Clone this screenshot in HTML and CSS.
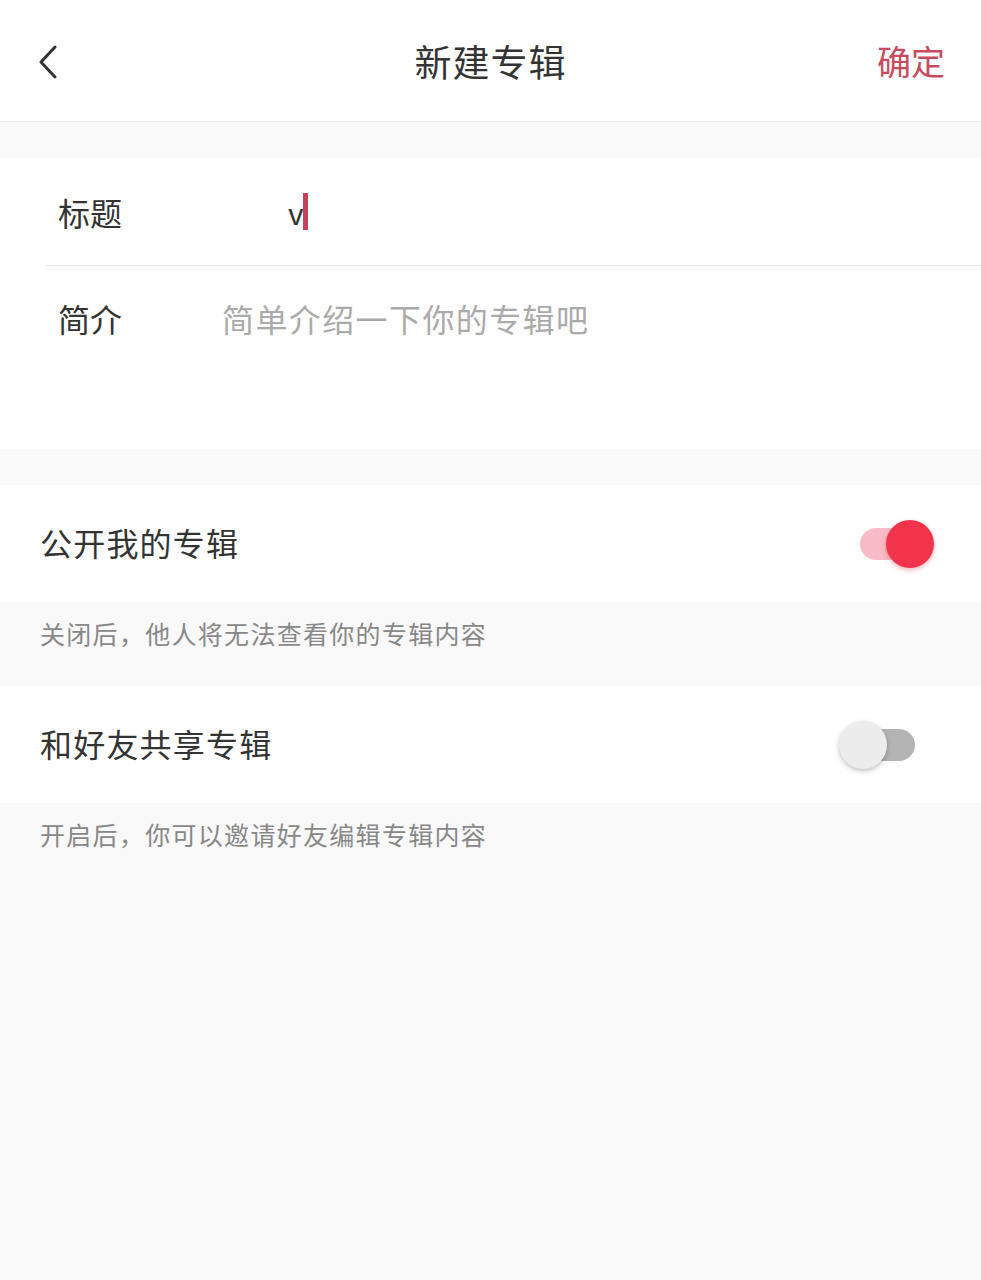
FILE: index.html
```html
<!DOCTYPE html>
<html lang="zh-CN">

<head>
    <meta charset="UTF-8">
    <meta name="viewport" content="width=device-width, initial-scale=1.0">
    <title>新建专辑</title>
    <link rel="stylesheet" href="styles.css">
</head>

<body>
    <header class="topbar">
        <button class="back" aria-label="返回">
            <svg width="20" height="34" viewBox="0 0 20 34">
                <path d="M17 2 L3 17 L17 32" fill="none" stroke="#333" stroke-width="3" stroke-linecap="round" stroke-linejoin="round" />
            </svg>
        </button>
        <h1 class="title">新建专辑</h1>
        <button class="confirm">确定</button>
    </header>

    <section class="form">
        <div class="field first">
            <span class="label">标题</span>
            <span class="value">v<i class="caret"></i></span>
        </div>
        <div class="field intro">
            <span class="label">简介</span>
            <span class="placeholder">简单介绍一下你的专辑吧</span>
        </div>
    </section>

    <section class="setting">
        <span class="setting-name">公开我的专辑</span>
        <span class="switch on"><i class="knob"></i></span>
    </section>
    <p class="hint">关闭后，他人将无法查看你的专辑内容</p>

    <section class="setting">
        <span class="setting-name">和好友共享专辑</span>
        <span class="switch"><i class="knob"></i></span>
    </section>
    <p class="hint">开启后，你可以邀请好友编辑专辑内容</p>
</body>

</html>
```

FILE: styles.css
```css
* {
    box-sizing: border-box;
    margin: 0;
    padding: 0;
    font-family: "Noto Sans CJK SC", "Noto Sans", sans-serif;
}

body {
    background: #f9f9f9;
    color: #333;
    min-height: 1280px;
}

.topbar {
    height: 122px;
    background: #fff;
    border-bottom: 1px solid #ececec;
    display: flex;
    align-items: center;
    justify-content: space-between;
    padding: 4px 36px 0 38px;
    position: relative;
}

.back {
    border: none;
    background: none;
    display: flex;
    margin-top: -2px;
}

.title {
    position: absolute;
    left: 0;
    right: 0;
    text-align: center;
    font-size: 37px;
    font-weight: 400;
    letter-spacing: 1px;
    color: #333;
    pointer-events: none;
    margin-top: -4px;
}

.confirm {
    border: none;
    background: none;
    font-size: 34px;
    color: #c84a5e;
    margin-top: -4px;
}

.form {
    margin-top: 36px;
    background: #fff;
    height: 291px;
}

.field {
    display: flex;
    align-items: center;
    margin-left: 46px;
    font-size: 32px;
}

.field.first {
    height: 108px;
    border-bottom: 1px solid #e6e6e6;
}

.field.intro {
    height: 104px;
}

.label {
    width: 176px;
    padding-left: 12px;
    color: #333;
}

.value {
    display: flex;
    align-items: center;
    margin-left: 66px;
    font-size: 30px;
    color: #333;
}

.caret {
    display: inline-block;
    width: 5px;
    height: 37px;
    background: #c8405a;
    margin-left: -1px;
}

.placeholder {
    color: #aaa;
    letter-spacing: 1.4px;
}

.setting {
    margin-top: 36px;
    background: #fff;
    height: 117px;
    display: flex;
    align-items: center;
    justify-content: space-between;
    padding: 0 46px 4px 40px;
    font-size: 32px;
}

.hint + .setting {
    margin-top: 0;
}

.setting-name {
    color: #333;
    letter-spacing: 1.2px;
}

.hint {
    height: 84px;
    padding: 13px 0 0 40px;
    font-size: 25px;
    color: #888;
    letter-spacing: 1.3px;
}

.switch {
    position: relative;
    width: 64px;
    height: 32px;
    border-radius: 16px;
    background: #b4b4b4;
    margin-right: 20px;
    margin-top: 4px;
}

.switch .knob {
    position: absolute;
    top: -8px;
    left: -12px;
    width: 48px;
    height: 48px;
    border-radius: 50%;
    background: #ececec;
    box-shadow: 0 2px 5px rgba(0, 0, 0, 0.25);
}

.switch.on {
    background: #f9bcc6;
    margin-right: 13px;
    width: 62px;
}

.switch.on .knob {
    left: auto;
    right: -12px;
    background: #f2334c;
    box-shadow: 0 2px 5px rgba(200, 40, 60, 0.35);
}
```
